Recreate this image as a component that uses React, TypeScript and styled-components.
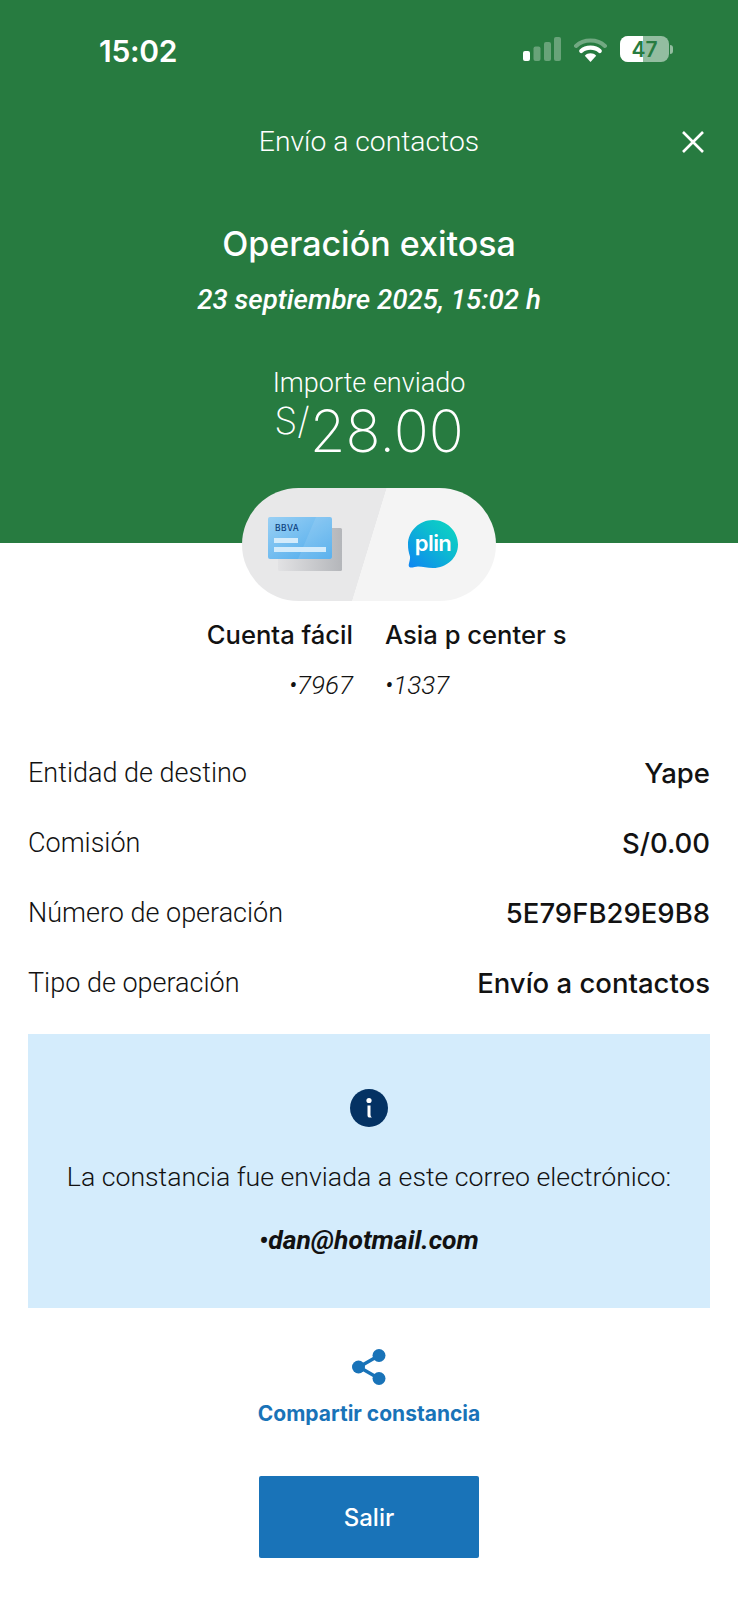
import styled, { createGlobalStyle } from 'styled-components';

const GlobalStyle = createGlobalStyle`
  html, body {
    margin: 0;
    padding: 0;
    background: #ffffff;
  }
  body {
    font-family: Roboto, "Liberation Sans", sans-serif;
    color: #121212;
  }
`;

const details = [
  { label: 'Entidad de destino', value: 'Yape' },
  { label: 'Comisión', value: 'S/0.00' },
  { label: 'Número de operación', value: '5E79FB29E9B8' },
  { label: 'Tipo de operación', value: 'Envío a contactos' },
];

export default function App() {
  return (
    <>
      <GlobalStyle />
      <Page>
        <Hero>
          <StatusBar>
            <Clock>15:02</Clock>
            <StatusIcons>
              <svg width="38" height="24" viewBox="0 0 38 24">
                <rect x="0" y="14" width="7" height="10" rx="2" fill="#fff" />
                <rect x="10.5" y="9.5" width="7" height="14.5" rx="2" fill="#fff" opacity="0.3" />
                <rect x="21" y="5" width="7" height="19" rx="2" fill="#fff" opacity="0.3" />
                <rect x="31" y="0" width="7" height="24" rx="2" fill="#fff" opacity="0.3" />
              </svg>
              <svg width="33" height="25" viewBox="0 0 32 24" fill="none">
                <path d="M2 8.5C9.5 1.5 22.5 1.5 30 8.5" stroke="#fff" strokeOpacity="0.35" strokeWidth="4" strokeLinecap="round" />
                <path d="M7 13.5C11.5 9 20.5 9 25 13.5" stroke="#fff" strokeWidth="4" strokeLinecap="round" />
                <path d="M16 24L10.5 18C13.5 15 18.5 15 21.5 18Z" fill="#fff" />
              </svg>
              <Battery>
                <BatteryCell>
                  <BatteryFill />
                  <BatteryLevel>47</BatteryLevel>
                </BatteryCell>
                <BatteryCap />
              </Battery>
            </StatusIcons>
          </StatusBar>

          <NavBar>
            <NavTitle>Envío a contactos</NavTitle>
            <CloseButton aria-label="Cerrar">
              <svg width="24" height="24" viewBox="0 0 24 24" fill="none" stroke="#fff" strokeWidth="2.6">
                <path d="M2 2L22 22M22 2L2 22" />
              </svg>
            </CloseButton>
          </NavBar>

          <Headline>Operación exitosa</Headline>
          <DateLine>23 septiembre 2025, 15:02 h</DateLine>
          <AmountLabel>Importe enviado</AmountLabel>
          <Amount>
            <Currency>S/</Currency>
            28.00
          </Amount>

          <TransferPill>
            <PillSide>
              <svg width="76" height="56" viewBox="0 0 76 56">
                <defs>
                  <linearGradient id="backCard" x1="0" y1="0" x2="1" y2="0">
                    <stop offset="0" stopColor="#e2e2e4" />
                    <stop offset="1" stopColor="#b4b6ba" />
                  </linearGradient>
                  <linearGradient id="frontCard" x1="0" y1="0" x2="1" y2="1">
                    <stop offset="0" stopColor="#9ad0f4" />
                    <stop offset="1" stopColor="#4aa9ec" />
                  </linearGradient>
                </defs>
                <rect x="10" y="11" width="64" height="43" rx="1.5" fill="url(#backCard)" />
                <rect x="0" y="0" width="64" height="42" rx="2" fill="url(#frontCard)" />
                <path d="M48 0H64V42H30Z" fill="#fff" opacity="0.1" />
                <text x="7" y="14" fontFamily="Inter, sans-serif" fontSize="8.5" fontWeight="500" letterSpacing="0.4" fill="#0c3f7e">BBVA</text>
                <rect x="6" y="21" width="24" height="5" fill="#d3ebfb" />
                <rect x="6" y="30" width="52" height="5" fill="#d3ebfb" />
              </svg>
            </PillSide>
            <PillSide>
              <svg width="52" height="52" viewBox="0 0 52 52">
                <defs>
                  <linearGradient id="plinBubble" x1="0" y1="1" x2="1" y2="0">
                    <stop offset="0" stopColor="#0f84f3" />
                    <stop offset="0.6" stopColor="#0cbdcf" />
                    <stop offset="1" stopColor="#0dd8c0" />
                  </linearGradient>
                </defs>
                <path
                  d="M26 1C39.5 1 51 12 51 25.500C51 39 39.500 49 26 49C20 49 16 47.500 11 47.500C8 47.500 3 50 2 47.500C1 45.500 3.500 41 3 37.500C1.500 33 1 29.500 1 25.500C1 12 12.500 1 26 1Z"
                  fill="url(#plinBubble)"
                />
                <text x="26" y="32" textAnchor="middle" fontFamily="Inter, sans-serif" fontSize="22" fontWeight="600" letterSpacing="-0.6" fill="#fff">plin</text>
              </svg>
            </PillSide>
          </TransferPill>
        </Hero>

        <Accounts>
          <AccountColumn $side="from">
            <AccountName>Cuenta fácil</AccountName>
            <AccountNumber>•7967</AccountNumber>
          </AccountColumn>
          <AccountColumn $side="to">
            <AccountName>Asia p center s</AccountName>
            <AccountNumber>•1337</AccountNumber>
          </AccountColumn>
        </Accounts>

        <DetailList>
          {details.map((row) => (
            <DetailRow key={row.label}>
              <DetailLabel>{row.label}</DetailLabel>
              <DetailValue>{row.value}</DetailValue>
            </DetailRow>
          ))}
        </DetailList>

        <Notice>
          <svg width="38" height="38" viewBox="0 0 38 38">
            <circle cx="19" cy="19" r="19" fill="#043263" />
            <circle cx="19" cy="11.500" r="2.600" fill="#fff" />
            <path d="M17.500 16.500H20.500V25.500C20.500 27 21 27.800 22 28.500H19C18 28.500 17.500 27.500 17.500 26Z" fill="#fff" />
          </svg>
          <NoticeText>La constancia fue enviada a este correo electrónico:</NoticeText>
          <NoticeEmail>•dan@hotmail.com</NoticeEmail>
        </Notice>

        <ShareLink>
          <svg width="34" height="36" viewBox="0 0 34 36" fill="none">
            <path d="M7 18L27 6.500M7 18L27 29.500" stroke="#1973b8" strokeWidth="3.400" />
            <circle cx="6.500" cy="18" r="6.500" fill="#1973b8" />
            <circle cx="27" cy="6.500" r="6.500" fill="#1973b8" />
            <circle cx="27" cy="29.500" r="6.500" fill="#1973b8" />
          </svg>
          <ShareLabel>Compartir constancia</ShareLabel>
        </ShareLink>

        <ExitButton>Salir</ExitButton>
      </Page>
    </>
  );
}

const Page = styled.div`
  width: 738px;
  height: 1600px;
  overflow: hidden;
  background: #ffffff;
`;

const Hero = styled.header`
  background: #277b40;
  color: #ffffff;
  display: flex;
  flex-direction: column;
  align-items: center;
`;

const StatusBar = styled.div`
  width: 100%;
  box-sizing: border-box;
  height: 102px;
  padding: 36px 65px 0 99px;
  display: flex;
  justify-content: space-between;
  align-items: flex-start;
`;

const Clock = styled.span`
  font-family: Inter, sans-serif;
  font-size: 30px;
  line-height: 30px;
  font-weight: 600;
  letter-spacing: -0.3px;
`;

const StatusIcons = styled.div`
  display: flex;
  align-items: center;
  gap: 13px;
  height: 26px;
`;

const Battery = styled.div`
  display: flex;
  align-items: center;
  gap: 1px;
`;

const BatteryCell = styled.div`
  position: relative;
  width: 49px;
  height: 26px;
  border-radius: 8px;
  overflow: hidden;
  background: rgba(255, 255, 255, 0.5);
`;

const BatteryFill = styled.div`
  width: 47%;
  height: 100%;
  background: #ffffff;
`;

const BatteryLevel = styled.span`
  position: absolute;
  inset: 0;
  display: flex;
  align-items: center;
  justify-content: center;
  font-family: Inter, sans-serif;
  font-size: 21px;
  font-weight: 600;
  color: #277b40;
`;

const BatteryCap = styled.div`
  width: 3px;
  height: 9px;
  border-radius: 0 3px 3px 0;
  background: rgba(255, 255, 255, 0.5);
`;

const NavBar = styled.div`
  position: relative;
  width: 100%;
  height: 78px;
  display: flex;
  justify-content: center;
  align-items: center;
`;

const NavTitle = styled.h1`
  margin: 0;
  font-size: 28.300px;
  font-weight: 300;
`;

const CloseButton = styled.button`
  position: absolute;
  right: 33px;
  top: 28px;
  padding: 0;
  border: 0;
  background: none;
  display: flex;
`;

const Headline = styled.h2`
  margin: 43px 0 0;
  font-family: Inter, sans-serif;
  font-size: 34px;
  line-height: 42px;
  font-weight: 500;
`;

const DateLine = styled.p`
  margin: 19px 0 0;
  font-size: 27.700px;
  line-height: 32px;
  font-weight: 500;
  font-style: italic;
`;

const AmountLabel = styled.p`
  margin: 51px 0 0;
  font-size: 27px;
  line-height: 32px;
  font-weight: 300;
`;

const Amount = styled.div`
  font-family: Inter, sans-serif;
  font-size: 58px;
  line-height: 64px;
  font-weight: 200;
  display: flex;
`;

const Currency = styled.span`
  font-size: 37px;
  line-height: 44px;
`;

const TransferPill = styled.div`
  margin: 25px 0 -58px;
  width: 254px;
  height: 113px;
  border-radius: 57px;
  overflow: hidden;
  background: linear-gradient(107deg, #e8e8e9 50%, #f4f4f4 50.2%);
  display: grid;
  grid-template-columns: 1fr 1fr;
`;

const PillSide = styled.div`
  display: flex;
  align-items: center;
  justify-content: center;
`;

const Accounts = styled.section`
  margin-top: 76px;
  display: grid;
  grid-template-columns: 353px 1fr;
  column-gap: 32px;
`;

const AccountColumn = styled.div<{ $side: 'from' | 'to' }>`
  display: flex;
  flex-direction: column;
  gap: 18px;
  text-align: ${(p) => (p.$side === 'from' ? 'right' : 'left')};
`;

const AccountName = styled.div`
  font-family: Inter, sans-serif;
  font-size: 25.600px;
  line-height: 32px;
  font-weight: 500;
`;

const AccountNumber = styled.div`
  font-size: 26px;
  line-height: 32px;
  font-weight: 300;
  font-style: italic;
`;

const DetailList = styled.section`
  margin-top: 56px;
  padding: 0 28px;
  display: flex;
  flex-direction: column;
  gap: 38px;
`;

const DetailRow = styled.div`
  display: flex;
  justify-content: space-between;
  align-items: center;
  height: 32px;
`;

const DetailLabel = styled.span`
  font-size: 27px;
  font-weight: 300;
`;

const DetailValue = styled.span`
  font-family: Inter, sans-serif;
  font-size: 27.500px;
  font-weight: 500;
`;

const Notice = styled.section`
  margin: 35px 28px 0;
  height: 274px;
  box-sizing: border-box;
  padding-top: 55px;
  background: #d4ecfc;
  display: flex;
  flex-direction: column;
  align-items: center;
`;

const NoticeText = styled.p`
  margin: 34px 0 0;
  font-size: 26.700px;
  line-height: 32px;
  font-weight: 300;
`;

const NoticeEmail = styled.p`
  margin: 31px 0 0;
  font-size: 26.500px;
  line-height: 32px;
  font-weight: 700;
  font-style: italic;
`;

const ShareLink = styled.a`
  margin-top: 41px;
  display: flex;
  flex-direction: column;
  align-items: center;
  gap: 16px;
`;

const ShareLabel = styled.span`
  font-family: Inter, sans-serif;
  font-size: 21px;
  line-height: 26px;
  font-weight: 700;
  color: #1973b8;
`;

const ExitButton = styled.button`
  display: block;
  margin: 49px auto 0;
  width: 220px;
  height: 82px;
  border: 0;
  border-radius: 2px;
  background: #1973b8;
  color: #ffffff;
  font-family: Inter, sans-serif;
  font-size: 24px;
  font-weight: 500;
`;
